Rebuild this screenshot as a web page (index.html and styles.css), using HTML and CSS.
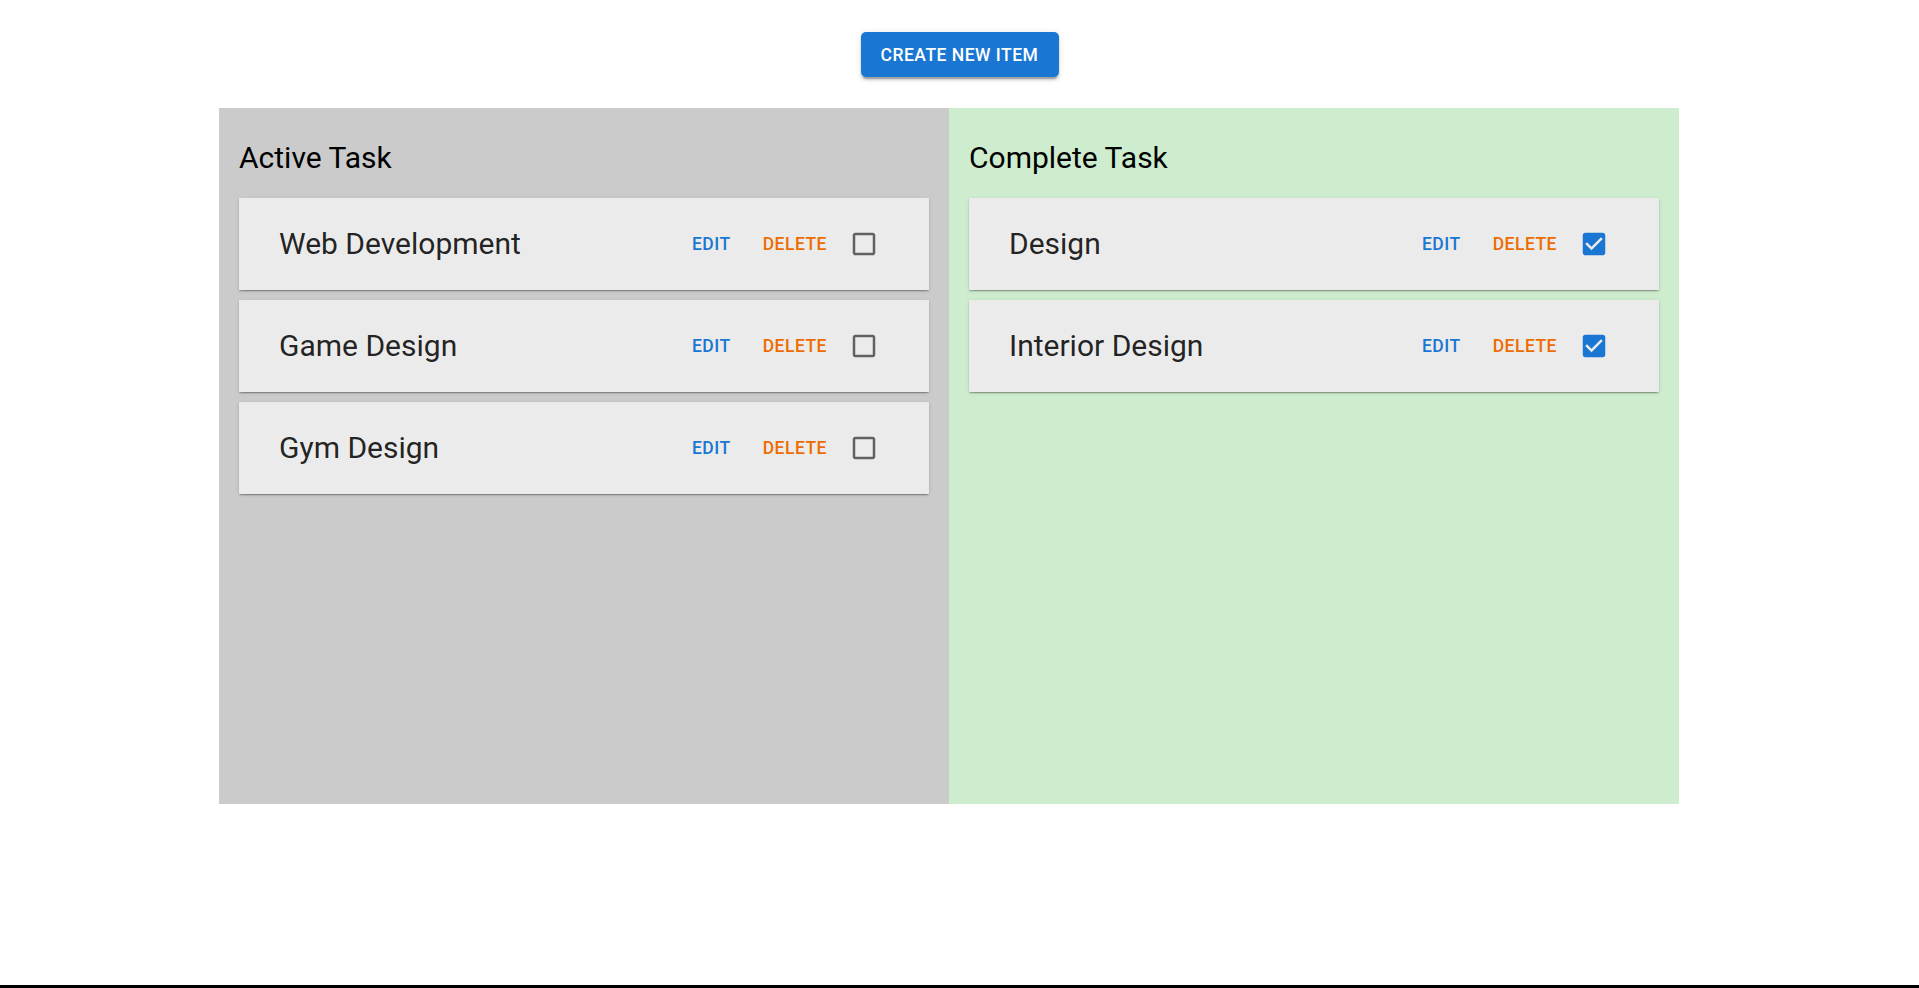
FILE: index.html
```html
<!DOCTYPE html>
<html lang="en">
<head>
<meta charset="utf-8">
<title>Tasks</title>
<link rel="stylesheet" href="styles.css">
</head>
<body>
<div class="page">
  <div class="toolbar">
    <button class="create-btn">Create New Item</button>
  </div>
  <div class="board">
    <section class="panel panel-active">
      <h2 class="panel-title">Active Task</h2>
      <div class="list">
        <div class="card">
          <span class="card-title">Web Development</span>
          <span class="action action-edit">Edit</span>
          <span class="action action-delete">Delete</span>
          <span class="check">
            <svg viewBox="0 0 24 24" width="30" height="30"><path fill="#616161" d="M19 5v14H5V5h14m0-2H5c-1.1 0-2 .9-2 2v14c0 1.1.9 2 2 2h14c1.1 0 2-.9 2-2V5c0-1.1-.9-2-2-2z"/></svg>
          </span>
        </div>
        <div class="card">
          <span class="card-title">Game Design</span>
          <span class="action action-edit">Edit</span>
          <span class="action action-delete">Delete</span>
          <span class="check">
            <svg viewBox="0 0 24 24" width="30" height="30"><path fill="#616161" d="M19 5v14H5V5h14m0-2H5c-1.1 0-2 .9-2 2v14c0 1.1.9 2 2 2h14c1.1 0 2-.9 2-2V5c0-1.1-.9-2-2-2z"/></svg>
          </span>
        </div>
        <div class="card">
          <span class="card-title">Gym Design</span>
          <span class="action action-edit">Edit</span>
          <span class="action action-delete">Delete</span>
          <span class="check">
            <svg viewBox="0 0 24 24" width="30" height="30"><path fill="#616161" d="M19 5v14H5V5h14m0-2H5c-1.1 0-2 .9-2 2v14c0 1.1.9 2 2 2h14c1.1 0 2-.9 2-2V5c0-1.1-.9-2-2-2z"/></svg>
          </span>
        </div>
      </div>
    </section>
    <section class="panel panel-complete">
      <h2 class="panel-title">Complete Task</h2>
      <div class="list">
        <div class="card">
          <span class="card-title">Design</span>
          <span class="action action-edit">Edit</span>
          <span class="action action-delete">Delete</span>
          <span class="check">
            <svg viewBox="0 0 24 24" width="30" height="30"><path fill="#1976d2" d="M19 3H5c-1.11 0-2 .9-2 2v14c0 1.1.89 2 2 2h14c1.11 0 2-.9 2-2V5c0-1.1-.89-2-2-2zm-9 14l-5-5 1.41-1.41L10 14.17l7.59-7.59L19 8l-9 9z"/></svg>
          </span>
        </div>
        <div class="card">
          <span class="card-title">Interior Design</span>
          <span class="action action-edit">Edit</span>
          <span class="action action-delete">Delete</span>
          <span class="check">
            <svg viewBox="0 0 24 24" width="30" height="30"><path fill="#1976d2" d="M19 3H5c-1.11 0-2 .9-2 2v14c0 1.1.89 2 2 2h14c1.11 0 2-.9 2-2V5c0-1.1-.89-2-2-2zm-9 14l-5-5 1.41-1.41L10 14.17l7.59-7.59L19 8l-9 9z"/></svg>
          </span>
        </div>
      </div>
    </section>
  </div>
  <footer class="footer-line"></footer>
</div>
</body>
</html>
```

FILE: styles.css
```css
* { box-sizing: border-box; }
html, body { margin: 0; padding: 0; background: #fff; }
body { font-family: Roboto, "Liberation Sans", sans-serif; color: rgba(0,0,0,0.87); }

.page {
  min-height: 988px;
  display: flex;
  flex-direction: column;
}

.toolbar {
  display: flex;
  justify-content: center;
  padding-top: 32px;
}

.create-btn {
  height: 45px;
  width: 198px;
  border: 0;
  border-radius: 5px;
  background: #1976d2;
  color: #fff;
  font-family: Roboto, "Liberation Sans", sans-serif;
  font-weight: 500;
  font-size: 17.5px;
  letter-spacing: 0.5px;
  text-transform: uppercase;
  box-shadow: 0 4px 1px -2px rgba(0,0,0,0.2), 0 2.5px 2.5px 0 rgba(0,0,0,0.14), 0 1.25px 6px 0 rgba(0,0,0,0.12);
  cursor: pointer;
}

.board {
  display: grid;
  grid-template-columns: 730px 730px;
  margin-top: 31px;
  margin-left: 219px;
  width: 1460px;
}

.panel {
  min-height: 696px;
  padding: 20px;
}
.panel-active { background: #cbcbcb; }
.panel-complete { background: #ceedce; }

.panel-title {
  margin: 10px 0 20px;
  font-size: 30px;
  font-weight: 400;
  line-height: 40px;
  color: #000;
}

.list {
  display: flex;
  flex-direction: column;
  gap: 10px;
}

.card {
  height: 92px;
  background: #ebebeb;
  display: flex;
  align-items: center;
  padding: 0 50px 0 40px;
  box-shadow: 0 2.5px 1.25px -1.25px rgba(0,0,0,0.2), 0 1.25px 1.25px 0 rgba(0,0,0,0.14), 0 1.25px 3.75px 0 rgba(0,0,0,0.12);
}

.card-title {
  flex: 1;
  font-size: 30px;
  font-weight: 400;
  padding-bottom: 2px;
  color: rgba(0,0,0,0.87);
}

.action {
  font-size: 17.5px;
  font-weight: 500;
  letter-spacing: 0.5px;
  text-transform: uppercase;
}
.action-edit { color: #1976d2; margin-right: 32px; }
.action-delete { color: #ed6c02; margin-right: 22px; }

.check {
  display: flex;
  width: 30px;
  height: 30px;
}

.footer-line {
  margin-top: auto;
  height: 3px;
  background: #000;
}
```
